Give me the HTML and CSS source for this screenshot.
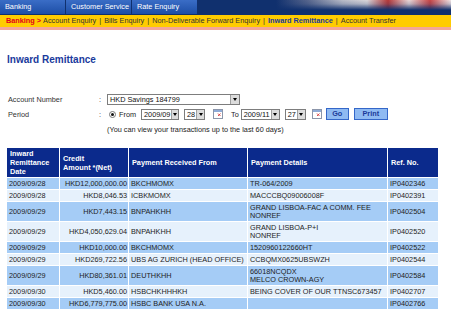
FILE: index.html
```html
<!DOCTYPE html>
<html lang="en">
<head>
    <meta charset="UTF-8">
    <title>Inward Remittance</title>
    <link rel="stylesheet" href="styles.css">
</head>
<body>
    <div class="topbar">
        <div class="tab">Banking</div>
        <div class="tab">Customer Service</div>
        <div class="tab">Rate Enquiry</div>
    </div>
    <div class="crumbs">
        <span class="home">Banking &gt;</span>
        <span>Account Enquiry</span><span class="sep">|</span>
        <span>Bills Enquiry</span><span class="sep">|</span>
        <span>Non-Deliverable Forward Enquiry</span><span class="sep">|</span>
        <span class="current">Inward Remittance</span><span class="sep">|</span>
        <span>Account Transfer</span>
    </div>

    <div class="page">
        <h1 class="title">Inward Remittance</h1>

        <div class="form">
            <div class="label">Account Number</div>
            <div class="colon">:</div>
            <div class="value">
                <div class="select acct"><span class="val">HKD Savings 184799</span><span class="arrow"></span></div>
            </div>

            <div class="label">Period</div>
            <div class="colon">:</div>
            <div class="value">
                <span class="radio"></span>
                <span class="from">From</span>
                <div class="select month"><span class="val">2009/09</span><span class="arrow"></span></div>
                <div class="select day"><span class="val">28</span><span class="arrow"></span></div>
                <svg class="cal" width="10" height="10" viewBox="0 0 10 10"><rect x="0.5" y="0.5" width="9" height="9" fill="#fff" stroke="#8c96aa"/><rect x="1" y="1" width="8" height="2" fill="#8eaad6"/><path d="M5 4.5l2.5 2.5M7.5 4.5L5 7" stroke="#d83a3a" stroke-width="0.9"/></svg>
                <span class="to">To</span>
                <div class="select month2"><span class="val">2009/11</span><span class="arrow"></span></div>
                <div class="select day"><span class="val">27</span><span class="arrow"></span></div>
                <svg class="cal cal2" width="10" height="10" viewBox="0 0 10 10"><rect x="0.5" y="0.5" width="9" height="9" fill="#fff" stroke="#8c96aa"/><rect x="1" y="1" width="8" height="2" fill="#8eaad6"/><path d="M5 4.5l2.5 2.5M7.5 4.5L5 7" stroke="#d83a3a" stroke-width="0.9"/></svg>
                <button class="btn go">Go</button>
                <button class="btn print">Print</button>
            </div>

            <div class="value note">(You can view your transactions up to the last 60 days)</div>
        </div>

        <table class="results">
            <colgroup>
                <col style="width:53px">
                <col style="width:69px">
                <col style="width:119px">
                <col style="width:140px">
                <col style="width:51px">
            </colgroup>
            <thead>
                <tr>
                    <th>Inward<br>Remittance<br>Date</th>
                    <th>Credit<br>Amount *(Net)</th>
                    <th>Payment Received From</th>
                    <th>Payment Details</th>
                    <th>Ref. No.</th>
                </tr>
            </thead>
            <tbody>
                <tr><td>2009/09/28</td><td class="amt">HKD12,000,000.00</td><td>BKCHMOMX</td><td>TR-064/2009</td><td>IP0402346</td></tr>
                <tr><td>2009/09/28</td><td class="amt">HKD8,046.53</td><td>ICBKMOMX</td><td>MACCCBQ09006008F</td><td>IP0402391</td></tr>
                <tr><td>2009/09/29</td><td class="amt">HKD7,443.15</td><td>BNPAHKHH</td><td>GRAND LISBOA-FAC A COMM. FEE<br>NONREF</td><td>IP0402504</td></tr>
                <tr><td>2009/09/29</td><td class="amt">HKD4,050,629.04</td><td>BNPAHKHH</td><td>GRAND LISBOA-P+I<br>NONREF</td><td>IP0402520</td></tr>
                <tr><td>2009/09/29</td><td class="amt">HKD10,000.00</td><td>BKCHMOMX</td><td>1520960122660HT</td><td>IP0402522</td></tr>
                <tr><td>2009/09/29</td><td class="amt">HKD269,722.56</td><td>UBS AG ZURICH (HEAD OFFICE)</td><td>CCBQMX0625UBSWZH</td><td>IP0402544</td></tr>
                <tr><td>2009/09/29</td><td class="amt">HKD80,361.01</td><td>DEUTHKHH</td><td>66018NCQDX<br>MELCO CROWN-AGY</td><td>IP0402584</td></tr>
                <tr><td>2009/09/30</td><td class="amt">HKD5,460.00</td><td>HSBCHKHHHKH</td><td>BEING COVER OF OUR TTNSC673457</td><td>IP0402707</td></tr>
                <tr><td>2009/09/30</td><td class="amt">HKD6,779,775.00</td><td>HSBC BANK USA N.A.</td><td></td><td>IP0402766</td></tr>
            </tbody>
        </table>
    </div>
</body>
</html>
```

FILE: styles.css
```css
body {
    margin: 0;
    font-family: "Liberation Sans", Arial, sans-serif;
    font-size: 7.3px;
    color: #222;
    background-color: #fff;
}

/* top tabs */
.topbar {
    display: flex;
    height: 15px;
    background:
        linear-gradient(to bottom, rgba(16, 48, 110, 0) 0, rgba(16, 48, 110, 0.2) 4px, #10306e 10px) right top / 175px 15px no-repeat,
        linear-gradient(to right, #10306e 0, #56658c 18%, #b9bcc8 38%, #dad7da 52%, #b73838 64%, #ead8d8 76%, #c94545 88%, #f2e6e6 100%) right top / 175px 10px no-repeat,
        #10306e;
}

.tab {
    width: 65px;
    height: 14px;
    margin-right: 1px;
    padding-left: 5px;
    box-sizing: border-box;
    background: linear-gradient(#3a6dc6, #1d4ea6);
    color: #fff;
    line-height: 14px;
    white-space: nowrap;
}

/* breadcrumb bar */
.crumbs {
    display: flex;
    height: 12px;
    padding-left: 6px;
    background-color: #ffcc00;
    border-bottom: 3px solid #f3a698;
    line-height: 12px;
    color: #333;
    white-space: nowrap;
}

.crumbs .home {
    color: #e2001a;
    font-weight: bold;
    margin-right: 2px;
}

.crumbs .sep {
    margin: 0 3px;
}

.crumbs .current {
    color: #1a3a9c;
    font-weight: bold;
}

.page {
    padding: 0 6px;
}

.title {
    margin: 24px 0 0 1px;
    font-size: 10px;
    line-height: 12px;
    font-weight: bold;
    color: #1a3a9c;
}

/* search form */
.form {
    display: grid;
    grid-template-columns: 91px 8px 1fr;
    grid-auto-rows: 14px;
    row-gap: 1px;
    align-items: center;
    margin: 26px 0 0 2px;
    color: #333;
}

.value {
    display: flex;
    align-items: center;
}

.note {
    grid-column: 3;
    color: #222;
}

.select {
    display: flex;
    height: 11px;
    box-sizing: border-box;
    border: 1px solid #7d7d7d;
    background-color: #fff;
    color: #111;
}

.select .val {
    flex: 1;
    padding-left: 2px;
    line-height: 9px;
    white-space: nowrap;
}

.select .arrow {
    display: flex;
    align-items: center;
    justify-content: center;
    width: 8px;
    margin: 0 0 0 1px;
    background-color: #dcdcdc;
    border-left: 1px solid #a0a0a0;
}

.select .arrow::after {
    content: "";
    border-left: 2.5px solid transparent;
    border-right: 2.5px solid transparent;
    border-top: 3px solid #000;
}

.acct { width: 133px; }
.month { width: 38px; margin-left: 5px; }
.month2 { width: 39px; margin-left: 2px; }
.day { width: 21px; margin-left: 5px; }

.radio {
    display: flex;
    align-items: center;
    justify-content: center;
    width: 7px;
    height: 7px;
    margin-left: 2px;
    box-sizing: border-box;
    border: 1px solid #777;
    border-radius: 50%;
    background-color: #fff;
}

.radio::after {
    content: "";
    width: 3px;
    height: 3px;
    border-radius: 50%;
    background-color: #111;
}

.from {
    margin-left: 3px;
    color: #222;
}

.cal {
    margin-left: 8px;
}

.cal2 {
    margin-left: 6px;
}

.to {
    margin-left: 8px;
    color: #222;
}

.btn {
    height: 12px;
    padding: 0;
    margin-left: 5px;
    border: 1px solid #3467c9;
    background-color: #8fbaf2;
    color: #1b3a99;
    font-family: inherit;
    font-size: 7.3px;
    font-weight: bold;
    line-height: 10px;
}

.go { width: 23px; margin-left: 4px; }
.print { width: 34px; }

/* results table */
.results {
    width: 432px;
    margin-top: 11px;
    border-collapse: collapse;
    table-layout: fixed;
}

.results th {
    padding: 1px 3px;
    background-color: #0b2a8c;
    color: #fff;
    font-weight: bold;
    text-align: left;
    line-height: 9px;
    border: 1px solid #fff;
}

.results td {
    padding: 1.5px 2px;
    line-height: 8px;
    border: 1px solid #fff;
    white-space: nowrap;
    overflow: hidden;
    color: #1e1e1e;
}

.results tbody tr:nth-child(odd) td {
    background-color: #a5ccf6;
}

.results tbody tr:nth-child(even) td {
    background-color: #e6f1fc;
}

.results td.amt {
    text-align: right;
    padding-right: 1px;
}
```
